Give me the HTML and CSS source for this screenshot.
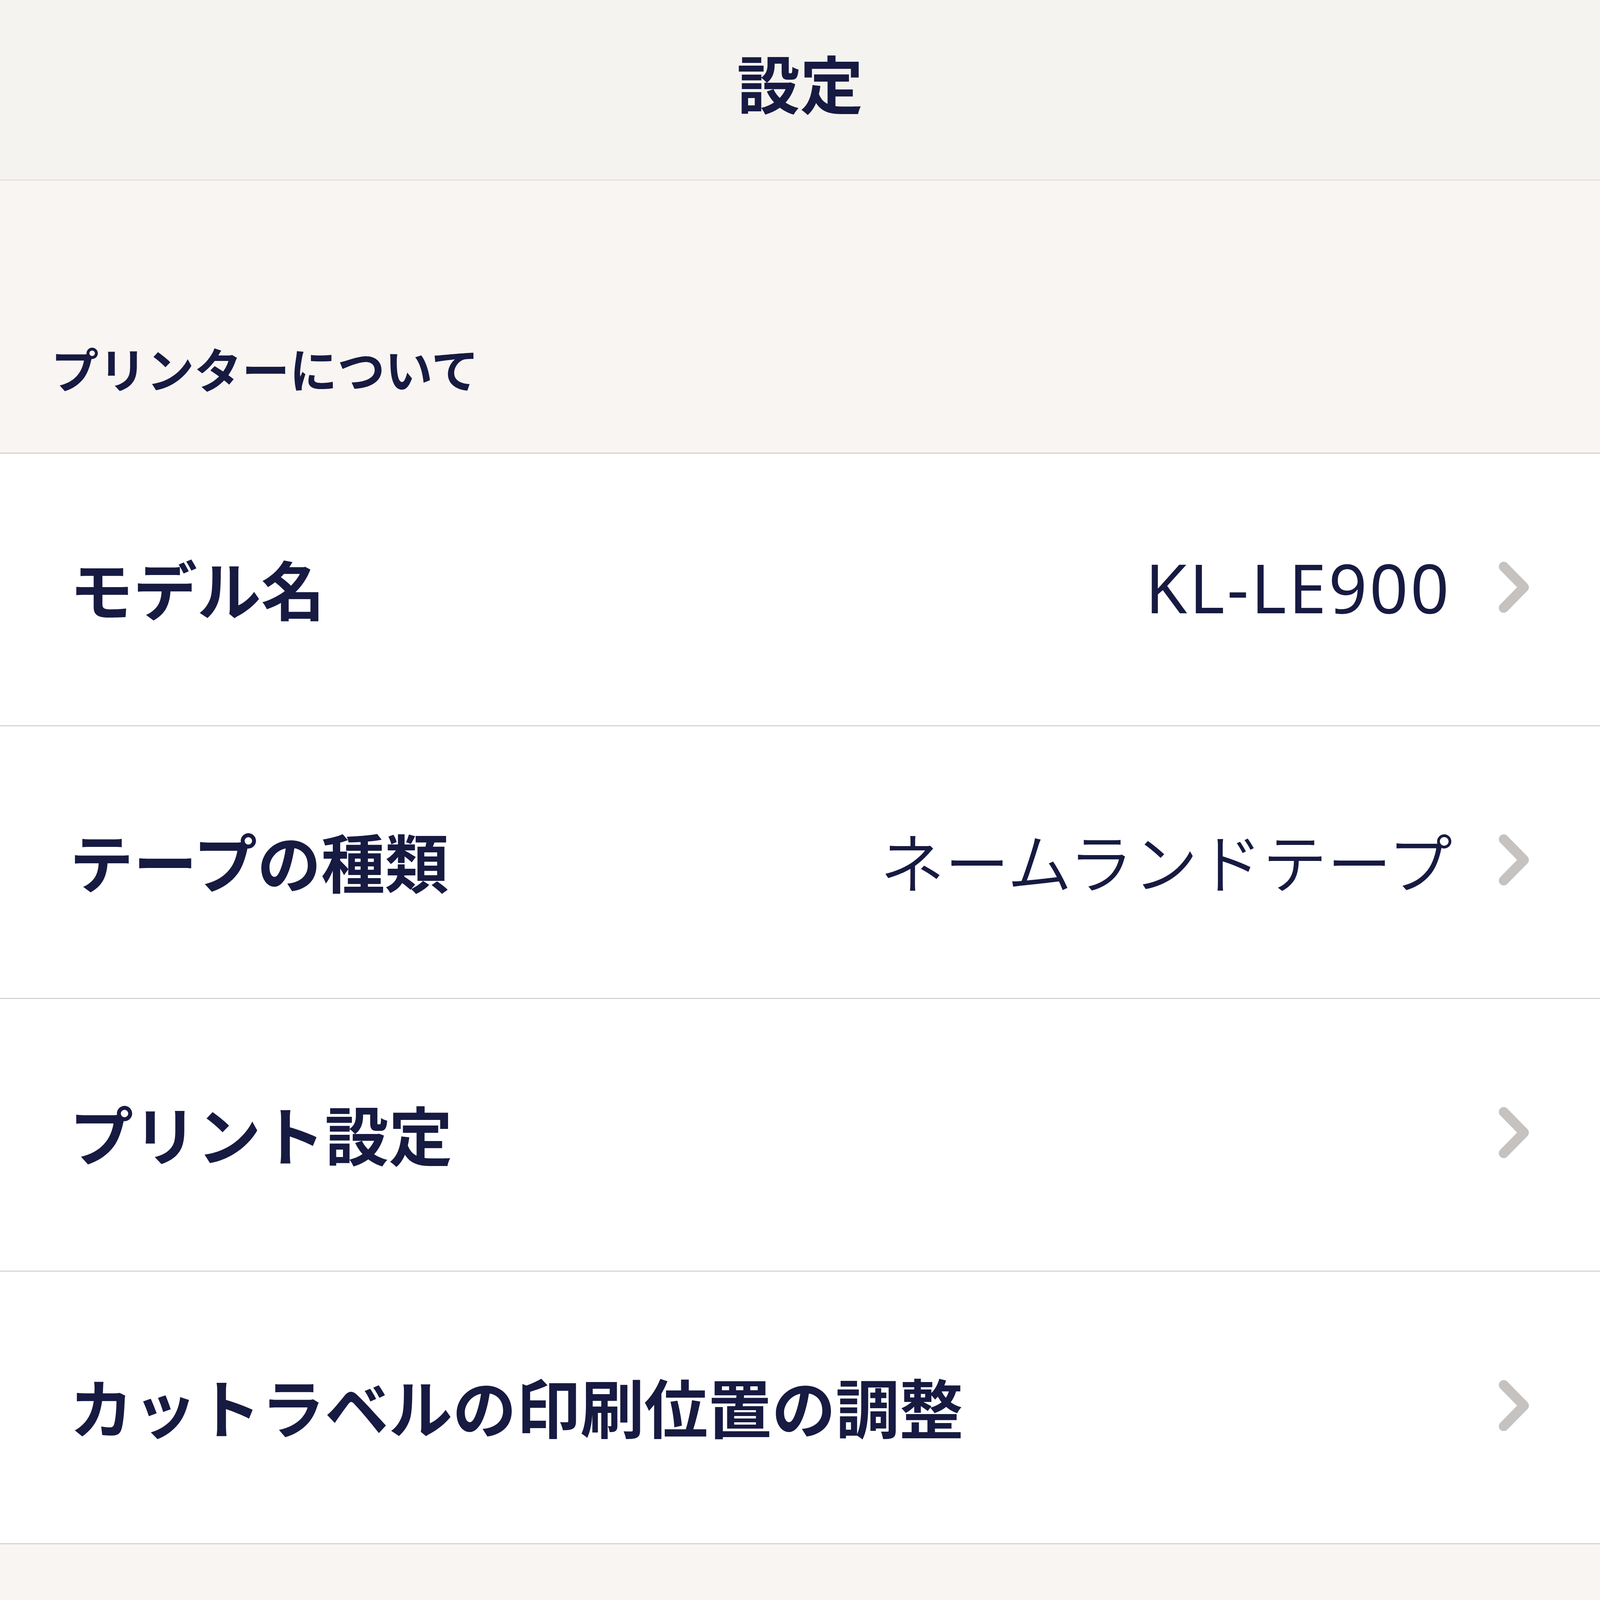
FILE: index.html
```html
<!DOCTYPE html>
<html lang="ja">
<head>
<meta charset="utf-8">
<title>設定</title>
<link rel="stylesheet" href="styles.css">
</head>
<body>
<header class="navbar">
  <h1 class="navbar-title">設定</h1>
</header>
<main class="settings">
  <div class="section-header">
    <h2 class="section-title">プリンターについて</h2>
  </div>
  <ul class="list">
    <li class="row">
      <span class="row-label">モデル名</span>
      <span class="row-value latin">KL-LE900</span>
      <svg class="chevron" viewBox="0 0 80 136" aria-hidden="true"><path d="M13 13 L67 68 L13 123"/></svg>
    </li>
    <li class="row">
      <span class="row-label">テープの種類</span>
      <span class="row-value">ネームランドテープ</span>
      <svg class="chevron" viewBox="0 0 80 136" aria-hidden="true"><path d="M13 13 L67 68 L13 123"/></svg>
    </li>
    <li class="row">
      <span class="row-label">プリント設定</span>
      <span class="row-value"></span>
      <svg class="chevron" viewBox="0 0 80 136" aria-hidden="true"><path d="M13 13 L67 68 L13 123"/></svg>
    </li>
    <li class="row">
      <span class="row-label">カットラベルの印刷位置の調整</span>
      <span class="row-value"></span>
      <svg class="chevron" viewBox="0 0 80 136" aria-hidden="true"><path d="M13 13 L67 68 L13 123"/></svg>
    </li>
  </ul>
</main>
</body>
</html>
```
FILE: styles.css
```css
/* 1rem = 100 reference pixels of the 4260px-wide design */
html {
  font-size: calc(100vw / 42.6);
  overflow: hidden;
}
html, body {
  margin: 0;
  padding: 0;
}
body {
  min-height: 41.69rem;
  background: #f8f5f2;
  color: #171a41;
  font-family: "Noto Sans CJK JP", "Noto Sans", sans-serif;
}
.navbar {
  height: 4.80rem;
  box-sizing: border-box;
  background: #f5f3ef;
  border-bottom: 0.03rem solid #dcd9d5;
  display: flex;
  align-items: center;
  justify-content: center;
  padding-bottom: 0.42rem;
}
.navbar-title {
  margin: 0;
  font-size: 1.68rem;
  line-height: 1;
  font-weight: 700;
}
.section-header {
  height: 7.27rem;
  box-sizing: border-box;
  background: #f8f5f2;
  border-bottom: 0.03rem solid #c6c3c1;
  display: flex;
  align-items: flex-end;
  padding: 0 0 1.63rem 1.36rem;
}
.section-title {
  margin: 0;
  font-size: 1.27rem;
  line-height: 1;
  font-weight: 700;
}
.list {
  list-style: none;
  margin: 0;
  padding: 0;
}
.row {
  height: 7.26rem;
  box-sizing: border-box;
  background: #ffffff;
  border-bottom: 0.03rem solid #c6c3c1;
  display: flex;
  align-items: center;
  padding: 0 1.89rem 0.10rem 1.85rem;
}
.row-label {
  font-size: 1.70rem;
  line-height: 1;
  font-weight: 700;
  white-space: nowrap;
}
.row-value {
  margin-left: auto;
  margin-right: 1.24rem;
  font-size: 1.72rem;
  line-height: 1;
  font-weight: 350;
  white-space: nowrap;
}
.row-value.latin {
  font-family: "Noto Sans", "Noto Sans CJK JP", sans-serif;
  font-size: 1.80rem;
  font-weight: 400;
  letter-spacing: 0.06rem;
  margin-right: 1.27rem;
}
.chevron {
  width: 0.80rem;
  height: 1.36rem;
  flex: none;
  fill: none;
  stroke: #c5c2c0;
  stroke-width: 26;
  stroke-linecap: round;
  stroke-linejoin: round;
}
```
